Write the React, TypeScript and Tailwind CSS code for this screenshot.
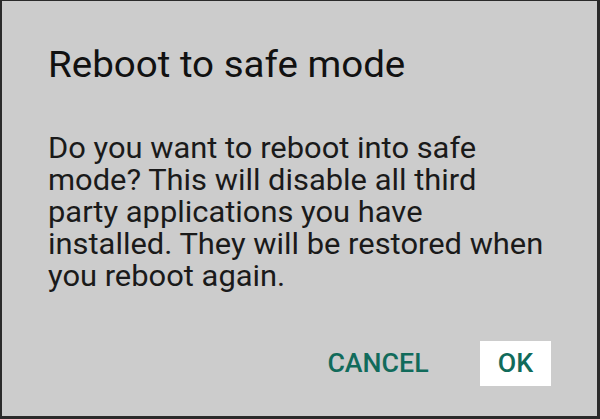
export default function App() {
  return (
    <div className="w-[600px] h-[419px] bg-[#2a2a2a] pl-[2px] pt-[1px] pr-[3px] pb-[3px]" style={{ fontFamily: "Roboto, 'Noto Sans', sans-serif" }}>
      <div className="w-full h-full bg-[#cccccc] flex flex-col">
        <h1 className="pl-[46px] pt-[42px] text-[36px] leading-[44px] text-[#111111] font-normal">
          <span className="inline-block origin-left scale-x-[1.07]">Reboot to safe mode</span>
        </h1>
        <p className="pl-[46px] mt-[45px] text-[29px] leading-[32px] text-[#1a1a1a]">
          <span className="inline-block origin-left scale-x-[1.065] whitespace-nowrap">
            Do you want to reboot into safe<br />
            mode? This will disable all third<br />
            party applications you have<br />
            installed. They will be restored when<br />
            you reboot again.
          </span>
        </p>
        <div className="flex justify-end items-center gap-[51px] pr-[46px] mt-auto mb-[30px]">
          <button className="text-[25px] leading-[30px] text-[#116b5b] font-medium">
            <span className="inline-block origin-right scale-x-[1.07]">CANCEL</span>
          </button>
          <button className="bg-white w-[71px] h-[45px] text-[25px] leading-[30px] text-[#116b5b] font-medium">
            <span className="inline-block scale-x-[1.07]">OK</span>
          </button>
        </div>
      </div>
    </div>
  );
}
